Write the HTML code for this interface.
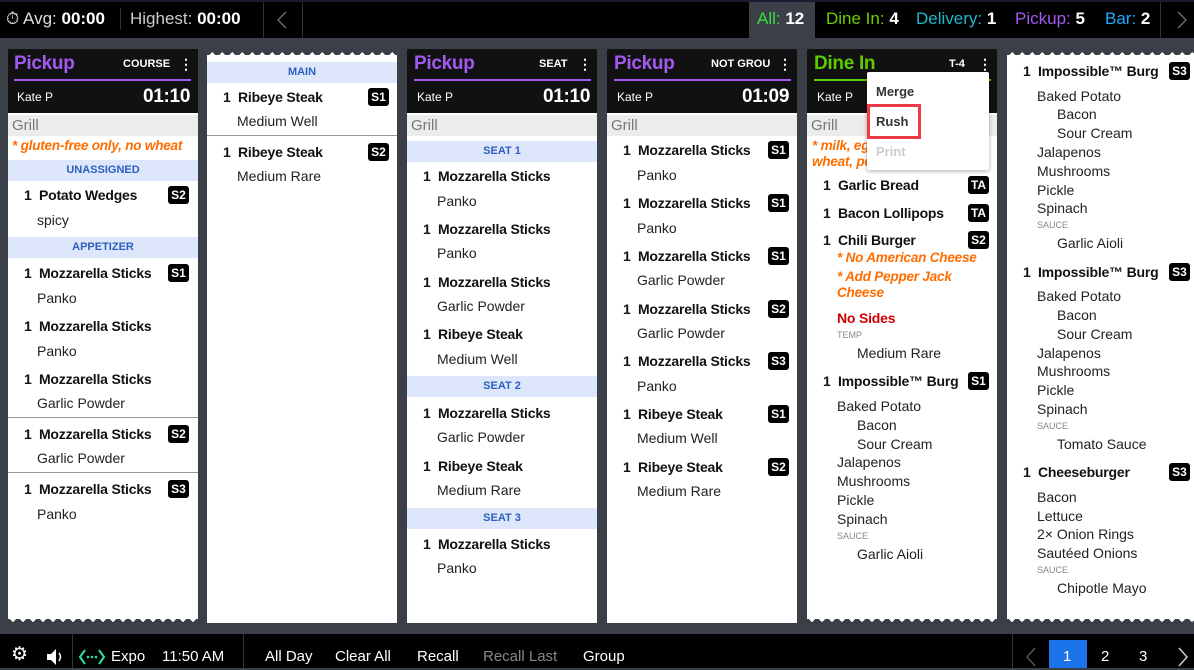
<!DOCTYPE html>
<html><head><meta charset="utf-8"><style>
*{margin:0;padding:0;box-sizing:border-box}
body{width:1194px;height:668px;overflow:hidden;background:#3b4048;font-family:"Liberation Sans",sans-serif;position:relative;color:#111}
.a{position:absolute;white-space:nowrap}
.l{position:absolute;white-space:nowrap;height:20px;line-height:20px}
.n{font-weight:bold;font-size:14px;color:#111;letter-spacing:-0.2px}
.m{font-size:14px;color:#222}
.b{position:absolute;width:21px;height:18px;line-height:18px;background:#000;color:#fff;font-weight:bold;font-size:12px;text-align:center;border-radius:3px}
.col{position:absolute;background:#fff;top:49px;width:190px}
.hd{position:absolute;background:#111;height:64px;width:190px;top:49px}
.ttl{font-size:19px;font-weight:bold;letter-spacing:-0.3px}
.sm{font-size:11px;font-weight:bold;color:#fff}
.band{position:absolute;background:#dde6fa;color:#2d5fbf;font-size:11px;font-weight:bold;text-align:center;height:21px;line-height:21px;width:190px}
.grill{position:absolute;background:#ececec;color:#777;font-size:15px;height:21px;line-height:21px;width:190px;padding-left:4px;top:115px}
.or{color:#ff6d00;font-weight:bold;font-style:italic;font-size:13.5px;letter-spacing:-0.2px}
.cap{font-size:9px;color:#888}
.sep{position:absolute;height:1px;background:#999;width:190px}
.zt{position:absolute;height:6px;width:190px;background:linear-gradient(135deg,#3b4048 50%,transparent 50%) 0 0/10px 6px repeat-x,linear-gradient(225deg,#3b4048 50%,transparent 50%) 0 0/10px 6px repeat-x}
.zb{position:absolute;height:6px;width:190px;background:linear-gradient(45deg,#3b4048 50%,transparent 50%) 0 0/10px 6px repeat-x,linear-gradient(315deg,#3b4048 50%,transparent 50%) 0 0/10px 6px repeat-x}
.top{font-size:17px;line-height:38px;top:0;height:38px}
.bt{font-size:15px;color:#fff;top:644px;height:26px;line-height:26px}
</style></head><body>
<div class="a" style="left:0;top:0;width:1194px;height:38px;background:#000;border-top:2px solid #1c1c30"></div>
<div class="a top" style="left:6px;color:#ddd">⏱ Avg: <b style="color:#fff">00:00</b></div>
<div class="a" style="left:120px;top:8px;width:1px;height:22px;background:#333"></div>
<div class="a top" style="left:130px;color:#ccc">Highest: <b style="color:#fff">00:00</b></div>
<div class="a" style="left:263px;top:2px;width:1px;height:36px;background:#333"></div>
<svg class="a" style="left:276px;top:11px" width="12" height="18"><path d="M10 1 L2 9 L10 17" stroke="#666" stroke-width="1.5" fill="none"/></svg>
<div class="a" style="left:302px;top:2px;width:1px;height:36px;background:#333"></div>
<div class="a" style="left:749px;top:2px;width:66px;height:38px;background:#3b4048"></div>
<div class="a top" style="left:757px;color:#3ddc3d">All: <b style="color:#fff">12</b></div>
<div class="a top" style="left:826px;color:#6ccf00">Dine In: <b style="color:#fff">4</b></div>
<div class="a top" style="left:916px;color:#1fb8c8">Delivery: <b style="color:#fff">1</b></div>
<div class="a top" style="left:1015px;color:#a259f0">Pickup: <b style="color:#fff">5</b></div>
<div class="a top" style="left:1105px;color:#1eaaff">Bar: <b style="color:#fff">2</b></div>
<div class="a" style="left:1160px;top:2px;width:1px;height:36px;background:#333"></div>
<svg class="a" style="left:1176px;top:11px" width="12" height="18"><path d="M2 1 L10 9 L2 17" stroke="#666" stroke-width="1.5" fill="none"/></svg>

<!-- col1 -->
<div class="col" style="left:8px;height:576px"></div>
<div class="hd" style="left:8px"></div>
<div class="l ttl" style="left:14px;top:54px;color:#a259f0">Pickup</div>
<div class="l sm" style="left:123px;top:54px">COURSE</div>
<div class="l sm" style="left:179px;top:54px;font-size:14px">⋮</div>
<div class="a" style="left:14px;top:79px;width:177px;height:2px;background:#a259f0"></div>
<div class="l" style="left:17px;top:87px;font-size:12px;color:#fff">Kate P</div>
<div class="l ttl" style="left:143px;top:87px;color:#fff">01:10</div>
<div class="grill" style="left:8px">Grill</div>
<div class="l or" style="left:12px;top:136px">* gluten-free only, no wheat</div>
<div class="band" style="left:8px;top:160px">UNASSIGNED</div>
<div class="l n" style="left:24px;top:185px">1&nbsp; Potato Wedges</div><div class="b" style="left:168px;top:186px">S2</div>
<div class="l m" style="left:37px;top:210px">spicy</div>
<div class="band" style="left:8px;top:237px">APPETIZER</div>
<div class="l n" style="left:24px;top:263px">1&nbsp; Mozzarella Sticks</div><div class="b" style="left:168px;top:264px">S1</div>
<div class="l m" style="left:37px;top:288px">Panko</div>
<div class="l n" style="left:24px;top:316px">1&nbsp; Mozzarella Sticks</div>
<div class="l m" style="left:37px;top:341px">Panko</div>
<div class="l n" style="left:24px;top:369px">1&nbsp; Mozzarella Sticks</div>
<div class="l m" style="left:37px;top:393px">Garlic Powder</div>
<div class="sep" style="left:8px;top:417px"></div>
<div class="l n" style="left:24px;top:424px">1&nbsp; Mozzarella Sticks</div><div class="b" style="left:168px;top:425px">S2</div>
<div class="l m" style="left:37px;top:448px">Garlic Powder</div>
<div class="sep" style="left:8px;top:472px"></div>
<div class="l n" style="left:24px;top:479px">1&nbsp; Mozzarella Sticks</div><div class="b" style="left:168px;top:480px">S3</div>
<div class="l m" style="left:37px;top:504px">Panko</div>
<div class="zb" style="left:8px;top:619px"></div>

<!-- col2 -->
<div class="col" style="left:207px;height:574px"></div>
<div class="zt" style="left:207px;top:49px"></div>
<div class="band" style="left:207px;top:62px">MAIN</div>
<div class="l n" style="left:223px;top:87px">1&nbsp; Ribeye Steak</div><div class="b" style="left:368px;top:88px">S1</div>
<div class="l m" style="left:237px;top:111px">Medium Well</div>
<div class="sep" style="left:207px;top:135px"></div>
<div class="l n" style="left:223px;top:142px">1&nbsp; Ribeye Steak</div><div class="b" style="left:368px;top:143px">S2</div>
<div class="l m" style="left:237px;top:166px">Medium Rare</div>

<!-- col3 -->
<div class="col" style="left:407px;height:574px"></div>
<div class="hd" style="left:407px"></div>
<div class="l ttl" style="left:414px;top:54px;color:#a259f0">Pickup</div>
<div class="l sm" style="left:539px;top:54px">SEAT</div>
<div class="l sm" style="left:578px;top:54px;font-size:14px">⋮</div>
<div class="a" style="left:414px;top:79px;width:177px;height:2px;background:#a259f0"></div>
<div class="l" style="left:417px;top:87px;font-size:12px;color:#fff">Kate P</div>
<div class="l ttl" style="left:543px;top:87px;color:#fff">01:10</div>
<div class="grill" style="left:407px">Grill</div>
<div class="band" style="left:407px;top:141px">SEAT 1</div>
<div class="l n" style="left:423px;top:166px">1&nbsp; Mozzarella Sticks</div>
<div class="l m" style="left:437px;top:191px">Panko</div>
<div class="l n" style="left:423px;top:219px">1&nbsp; Mozzarella Sticks</div>
<div class="l m" style="left:437px;top:243px">Panko</div>
<div class="l n" style="left:423px;top:272px">1&nbsp; Mozzarella Sticks</div>
<div class="l m" style="left:437px;top:296px">Garlic Powder</div>
<div class="l n" style="left:423px;top:324px">1&nbsp; Ribeye Steak</div>
<div class="l m" style="left:437px;top:349px">Medium Well</div>
<div class="band" style="left:407px;top:376px">SEAT 2</div>
<div class="l n" style="left:423px;top:403px">1&nbsp; Mozzarella Sticks</div>
<div class="l m" style="left:437px;top:427px">Garlic Powder</div>
<div class="l n" style="left:423px;top:456px">1&nbsp; Ribeye Steak</div>
<div class="l m" style="left:437px;top:480px">Medium Rare</div>
<div class="band" style="left:407px;top:508px">SEAT 3</div>
<div class="l n" style="left:423px;top:534px">1&nbsp; Mozzarella Sticks</div>
<div class="l m" style="left:437px;top:558px">Panko</div>

<!-- col4 -->
<div class="col" style="left:607px;height:574px"></div>
<div class="hd" style="left:607px"></div>
<div class="l ttl" style="left:614px;top:54px;color:#a259f0">Pickup</div>
<div class="l sm" style="left:711px;top:54px">NOT GROU</div>
<div class="l sm" style="left:778px;top:54px;font-size:14px">⋮</div>
<div class="a" style="left:614px;top:79px;width:177px;height:2px;background:#a259f0"></div>
<div class="l" style="left:617px;top:87px;font-size:12px;color:#fff">Kate P</div>
<div class="l ttl" style="left:742px;top:87px;color:#fff">01:09</div>
<div class="grill" style="left:607px">Grill</div>
<div class="l n" style="left:623px;top:140px">1&nbsp; Mozzarella Sticks</div><div class="b" style="left:768px;top:141px">S1</div>
<div class="l m" style="left:637px;top:165px">Panko</div>
<div class="l n" style="left:623px;top:193px">1&nbsp; Mozzarella Sticks</div><div class="b" style="left:768px;top:194px">S1</div>
<div class="l m" style="left:637px;top:218px">Panko</div>
<div class="l n" style="left:623px;top:246px">1&nbsp; Mozzarella Sticks</div><div class="b" style="left:768px;top:247px">S1</div>
<div class="l m" style="left:637px;top:270px">Garlic Powder</div>
<div class="l n" style="left:623px;top:299px">1&nbsp; Mozzarella Sticks</div><div class="b" style="left:768px;top:300px">S2</div>
<div class="l m" style="left:637px;top:323px">Garlic Powder</div>
<div class="l n" style="left:623px;top:351px">1&nbsp; Mozzarella Sticks</div><div class="b" style="left:768px;top:352px">S3</div>
<div class="l m" style="left:637px;top:376px">Panko</div>
<div class="l n" style="left:623px;top:404px">1&nbsp; Ribeye Steak</div><div class="b" style="left:768px;top:405px">S1</div>
<div class="l m" style="left:637px;top:428px">Medium Well</div>
<div class="l n" style="left:623px;top:457px">1&nbsp; Ribeye Steak</div><div class="b" style="left:768px;top:458px">S2</div>
<div class="l m" style="left:637px;top:481px">Medium Rare</div>

<!-- col5 -->
<div class="col" style="left:807px;height:576px"></div>
<div class="hd" style="left:807px"></div>
<div class="l ttl" style="left:814px;top:54px;color:#5ccb00">Dine In</div>
<div class="l sm" style="left:949px;top:54px">T-4</div>
<div class="l sm" style="left:978px;top:54px;font-size:14px">⋮</div>
<div class="a" style="left:814px;top:79px;width:177px;height:2px;background:#5ccb00"></div>
<div class="l" style="left:817px;top:87px;font-size:12px;color:#fff">Kate P</div>
<div class="grill" style="left:807px">Grill</div>
<div class="l or" style="left:812px;top:136px">* milk, eg</div>
<div class="l or" style="left:812px;top:152px">wheat, pe</div>
<div class="l n" style="left:823px;top:175px">1&nbsp; Garlic Bread</div><div class="b" style="left:968px;top:176px">TA</div>
<div class="l n" style="left:823px;top:203px">1&nbsp; Bacon Lollipops</div><div class="b" style="left:968px;top:204px">TA</div>
<div class="l n" style="left:823px;top:230px">1&nbsp; Chili Burger</div><div class="b" style="left:968px;top:231px">S2</div>
<div class="l or" style="left:837px;top:248px">* No American Cheese</div>
<div class="l or" style="left:837px;top:267px">* Add Pepper Jack</div>
<div class="l or" style="left:837px;top:283px">Cheese</div>
<div class="l n" style="left:837px;top:308px;color:#d10000">No Sides</div>
<div class="l cap" style="left:837px;top:325px">TEMP</div>
<div class="l m" style="left:857px;top:343px">Medium Rare</div>
<div class="l n" style="left:823px;top:371px">1&nbsp; Impossible™ Burg</div><div class="b" style="left:968px;top:372px">S1</div>
<div class="l m" style="left:837px;top:396px">Baked Potato</div>
<div class="l m" style="left:857px;top:415px">Bacon</div>
<div class="l m" style="left:857px;top:434px">Sour Cream</div>
<div class="l m" style="left:837px;top:452px">Jalapenos</div>
<div class="l m" style="left:837px;top:471px">Mushrooms</div>
<div class="l m" style="left:837px;top:490px">Pickle</div>
<div class="l m" style="left:837px;top:509px">Spinach</div>
<div class="l cap" style="left:837px;top:526px">SAUCE</div>
<div class="l m" style="left:857px;top:544px">Garlic Aioli</div>
<div class="zb" style="left:807px;top:619px"></div>
<div class="a" style="left:867px;top:72px;width:122px;height:98px;background:#fff;box-shadow:0 1px 4px rgba(0,0,0,.35);border-radius:2px"></div>
<div class="l" style="left:876px;top:82px;font-size:13px;font-weight:bold;color:#333">Merge</div>
<div class="a" style="left:867px;top:104px;width:54px;height:35px;border:3px solid #ee3b45"></div>
<div class="l" style="left:876px;top:112px;font-size:13px;font-weight:bold;color:#333">Rush</div>
<div class="l" style="left:876px;top:142px;font-size:13px;font-weight:bold;color:#ccc">Print</div>

<!-- col6 -->
<div class="col" style="left:1007px;width:187px;height:576px"></div>
<div class="zt" style="left:1007px;top:49px;width:187px"></div>
<div class="l n" style="left:1023px;top:61px">1&nbsp; Impossible™ Burg</div><div class="b" style="left:1169px;top:62px">S3</div>
<div class="l m" style="left:1037px;top:86px">Baked Potato</div>
<div class="l m" style="left:1057px;top:104px">Bacon</div>
<div class="l m" style="left:1057px;top:123px">Sour Cream</div>
<div class="l m" style="left:1037px;top:142px">Jalapenos</div>
<div class="l m" style="left:1037px;top:161px">Mushrooms</div>
<div class="l m" style="left:1037px;top:180px">Pickle</div>
<div class="l m" style="left:1037px;top:198px">Spinach</div>
<div class="l cap" style="left:1037px;top:215px">SAUCE</div>
<div class="l m" style="left:1057px;top:233px">Garlic Aioli</div>
<div class="l n" style="left:1023px;top:262px">1&nbsp; Impossible™ Burg</div><div class="b" style="left:1169px;top:263px">S3</div>
<div class="l m" style="left:1037px;top:286px">Baked Potato</div>
<div class="l m" style="left:1057px;top:305px">Bacon</div>
<div class="l m" style="left:1057px;top:324px">Sour Cream</div>
<div class="l m" style="left:1037px;top:343px">Jalapenos</div>
<div class="l m" style="left:1037px;top:361px">Mushrooms</div>
<div class="l m" style="left:1037px;top:380px">Pickle</div>
<div class="l m" style="left:1037px;top:399px">Spinach</div>
<div class="l cap" style="left:1037px;top:416px">SAUCE</div>
<div class="l m" style="left:1057px;top:434px">Tomato Sauce</div>
<div class="l n" style="left:1023px;top:462px">1&nbsp; Cheeseburger</div><div class="b" style="left:1169px;top:463px">S3</div>
<div class="l m" style="left:1037px;top:487px">Bacon</div>
<div class="l m" style="left:1037px;top:506px">Lettuce</div>
<div class="l m" style="left:1037px;top:524px">2× Onion Rings</div>
<div class="l m" style="left:1037px;top:543px">Sautéed Onions</div>
<div class="l cap" style="left:1037px;top:560px">SAUCE</div>
<div class="l m" style="left:1057px;top:578px">Chipotle Mayo</div>
<div class="zb" style="left:1007px;top:619px;width:187px"></div>

<!-- bottom bar -->
<div class="a" style="left:0;top:634px;width:1194px;height:34px;background:#000"></div>
<div class="a bt" style="left:11px;font-size:19px;top:642px">⚙</div>
<svg class="a" style="left:46px;top:648px" width="22" height="18"><path d="M1 6 H5 L10 1 V17 L5 12 H1 Z" fill="#fff"/><path d="M13 5 Q16 9 13 13" stroke="#fff" stroke-width="1.5" fill="none"/></svg>
<div class="a" style="left:72px;top:634px;width:1px;height:34px;background:#333"></div>
<svg class="a" style="left:79px;top:648px" width="26" height="18"><path d="M6 2 L1 9 L6 16 M20 2 L25 9 L20 16" stroke="#2fe0a0" stroke-width="2" fill="none"/><circle cx="9" cy="9" r="1.3" fill="#2fe0a0"/><circle cx="13" cy="9" r="1.3" fill="#2fe0a0"/><circle cx="17" cy="9" r="1.3" fill="#2fe0a0"/></svg>
<div class="a bt" style="left:111px">Expo</div>
<div class="a bt" style="left:162px">11:50 AM</div>
<div class="a" style="left:243px;top:634px;width:1px;height:34px;background:#333"></div>
<div class="a bt" style="left:265px">All Day</div>
<div class="a bt" style="left:335px">Clear All</div>
<div class="a bt" style="left:417px">Recall</div>
<div class="a bt" style="left:483px;color:#888">Recall Last</div>
<div class="a bt" style="left:583px">Group</div>
<div class="a" style="left:1012px;top:634px;width:1px;height:34px;background:#333"></div>
<svg class="a" style="left:1025px;top:647px" width="12" height="20"><path d="M10 1 L2 10 L10 19" stroke="#555" stroke-width="1.5" fill="none"/></svg>
<div class="a" style="left:1049px;top:640px;width:38px;height:28px;background:#1a73e8"></div>
<div class="a bt" style="left:1063px">1</div>
<div class="a bt" style="left:1101px">2</div>
<div class="a bt" style="left:1139px">3</div>
<svg class="a" style="left:1177px;top:647px" width="12" height="20"><path d="M2 1 L10 10 L2 19" stroke="#ccc" stroke-width="1.5" fill="none"/></svg>
</body></html>
